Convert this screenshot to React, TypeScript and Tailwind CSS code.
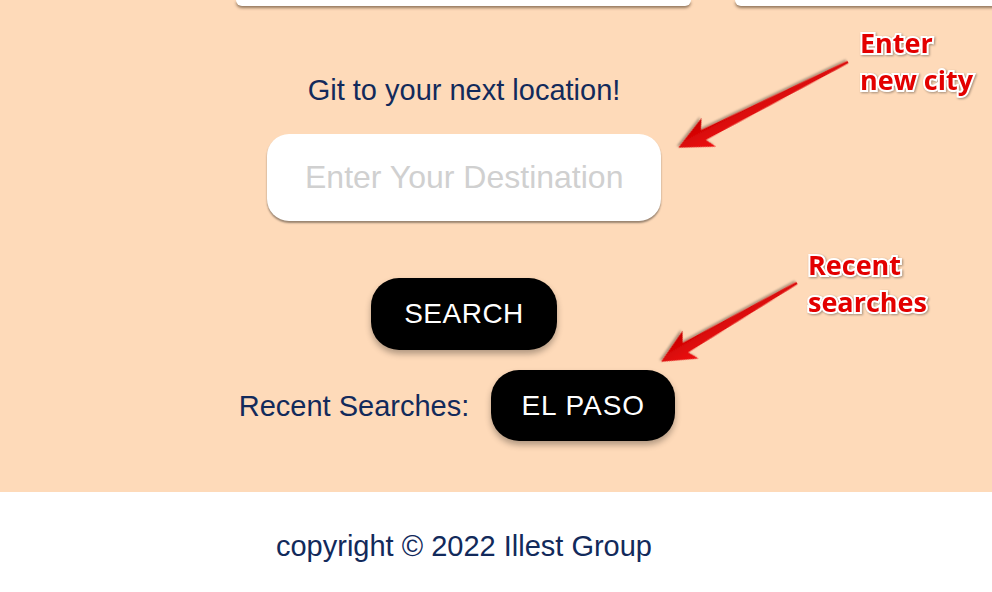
import { useState } from "react";

// Red callout arrow, drawn along +x then rotated into place
function Arrow({ x, y, angle, length }: { x: number; y: number; angle: number; length: number }) {
  const L = length;
  const points = `0,-1.2 ${L - 28},-5.5 ${L - 34},-16 ${L},0 ${L - 34},16 ${L - 28},5.5 0,1.2`;
  return (
    <g transform={`translate(${x} ${y}) rotate(${angle})`}>
      <polygon points={points} fill="url(#arrowRed)" filter="url(#arrowShadow)" />
    </g>
  );
}

export default function App() {
  const [city, setCity] = useState("");

  return (
    <div className="relative w-[992px] h-[592px] overflow-hidden bg-white font-['Liberation_Sans',Arial,sans-serif] text-[#122a5b]">
      {/* Main peach section */}
      <div className="bg-[#fedab9] h-[492px] overflow-hidden">
        <div className="w-[928px] flex flex-col items-center">
          {/* bottoms of the weather cards above */}
          <div className="flex gap-[44px] w-[928px] pl-[236px]">
            <div className="shrink-0 w-[455px] h-[6px] bg-white rounded-b-[6px] shadow-[0_2px_3px_rgba(60,40,20,0.55)]" />
            <div className="shrink-0 w-[455px] h-[6px] bg-white rounded-b-[6px] shadow-[0_2px_3px_rgba(60,40,20,0.55)]" />
          </div>

          <p className="mt-[67px] text-[29px] leading-[34px]">Git to your next location!</p>

          <input
            type="text"
            value={city}
            onChange={(e) => setCity(e.target.value)}
            placeholder="Enter Your Destination"
            className="mt-[27px] w-[394px] h-[87px] bg-white rounded-[22px] pl-[38px] text-[32px] text-[#333] placeholder:text-[#d0d0d0] outline-none shadow-[0_2px_2px_rgba(0,0,0,0.4)]"
          />

          <button className="mt-[57px] w-[186px] h-[72px] bg-black text-white rounded-[28px] text-[28px] tracking-[0.5px] shadow-[0_4px_6px_rgba(0,0,0,0.3)]">
            SEARCH
          </button>

          {/* Recent searches */}
          <div className="mt-[20px] flex items-center ml-[-14px]">
            <span className="text-[29px] leading-[34px]">Recent Searches:</span>
            <button className="ml-[22px] w-[184px] h-[71px] bg-black text-white rounded-[28px] text-[28px] tracking-[1px] shadow-[0_4px_6px_rgba(0,0,0,0.3)]">
              EL PASO
            </button>
          </div>
        </div>
      </div>

      {/* Footer */}
      <footer className="w-[928px] pt-[37px] text-center">
        <p className="text-[29px] leading-[34px]">copyright © 2022 Illest Group</p>
      </footer>

      {/* Annotation overlay */}
      <svg className="absolute left-0 top-0 pointer-events-none" width="992" height="592">
        <defs>
          <linearGradient id="arrowRed" x1="0" y1="0" x2="0" y2="1">
            <stop offset="0" stopColor="#f01010" />
            <stop offset="1" stopColor="#c80000" />
          </linearGradient>
          <filter id="arrowShadow" x="-20%" y="-50%" width="140%" height="200%">
            <feDropShadow dx="1" dy="2" stdDeviation="1.2" floodColor="#000" floodOpacity="0.35" />
          </filter>
        </defs>
        <Arrow x={848} y={62} angle={153.2} length={190} />
        <Arrow x={797} y={283} angle={149.9} length={157} />
      </svg>

      <div className="absolute left-[860px] top-[24px] font-['Open_Sans',sans-serif] font-bold text-[27px] leading-[37px] text-[#e30000] [paint-order:stroke_fill] [-webkit-text-stroke:4px_white] [filter:drop-shadow(1px_1px_1px_rgba(0,0,0,0.35))]">
        <div>Enter</div>
        <div>new city</div>
      </div>
      <div className="absolute left-[808px] top-[246px] font-['Open_Sans',sans-serif] font-bold text-[27px] leading-[37px] text-[#e30000] [paint-order:stroke_fill] [-webkit-text-stroke:4px_white] [filter:drop-shadow(1px_1px_1px_rgba(0,0,0,0.35))]">
        <div>Recent</div>
        <div>searches</div>
      </div>
    </div>
  );
}
